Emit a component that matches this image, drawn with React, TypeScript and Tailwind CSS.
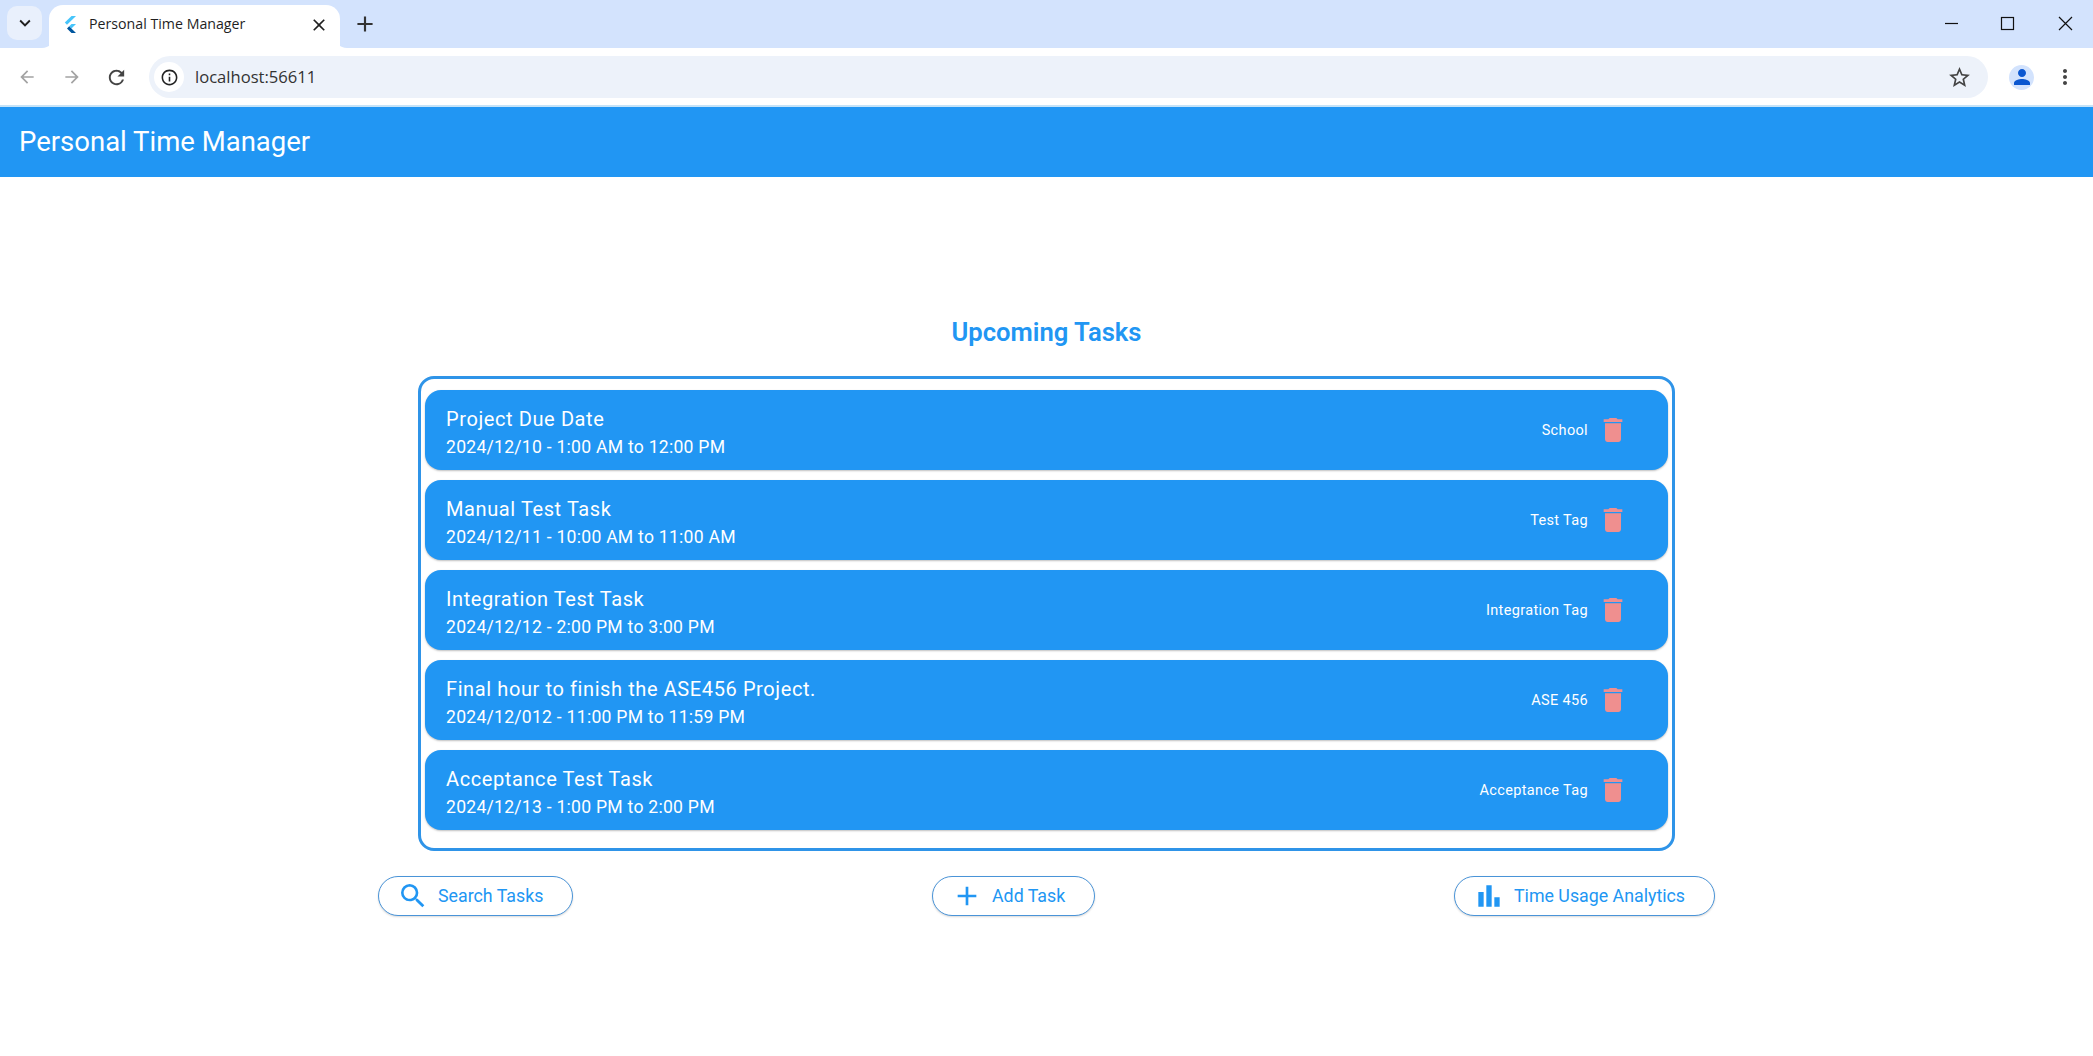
import type { ReactNode } from "react";
import {
  MdAdd,
  MdArrowBack,
  MdArrowForward,
  MdBarChart,
  MdClose,
  MdDelete,
  MdInfoOutline,
  MdKeyboardArrowDown,
  MdMoreVert,
  MdPerson,
  MdRefresh,
  MdSearch,
  MdStarBorder,
} from "react-icons/md";

const tasks = [
  { title: "Project Due Date", when: "2024/12/10 - 1:00 AM to 12:00 PM", tag: "School" },
  { title: "Manual Test Task", when: "2024/12/11 - 10:00 AM to 11:00 AM", tag: "Test Tag" },
  { title: "Integration Test Task", when: "2024/12/12 - 2:00 PM to 3:00 PM", tag: "Integration Tag" },
  { title: "Final hour to finish the ASE456 Project.", when: "2024/12/012 - 11:00 PM to 11:59 PM", tag: "ASE 456" },
  { title: "Acceptance Test Task", when: "2024/12/13 - 1:00 PM to 2:00 PM", tag: "Acceptance Tag" },
];

function FlutterLogo() {
  return (
    <svg width="14" height="17" viewBox="0 0 14 17">
      <path d="M8.5 0H13L4 8.8 1.8 6.6z" fill="#47c5fb" />
      <path d="M8.5 8H13L8.4 12.5 6.2 10.3z" fill="#47c5fb" />
      <path d="M6.2 10.3l2.2 2.2 4.6 4.5H8.5l-4.5-4.5z" fill="#00569e" />
    </svg>
  );
}

function TabCorner({ side }: { side: "left" | "right" }) {
  return (
    <svg width="12" height="12" viewBox="0 0 12 12" className="self-end shrink-0">
      {side === "left" ? <path d="M12 0v12H0C7 12 12 7 12 0z" fill="#fff" /> : <path d="M0 0v12h12C5 12 0 7 0 0z" fill="#fff" />}
    </svg>
  );
}

function TabStrip() {
  return (
    <div className="h-12 bg-[#d3e3fd] flex items-end shrink-0">
      <div className="w-[35px] h-[34px] ml-[7px] mb-2 rounded-[10px] bg-[#e9f0fc] flex items-center justify-center text-[#1f1f1f]">
        <MdKeyboardArrowDown size={22} />
      </div>
      <TabCorner side="left" />
      <div className="-ml-[5px] -mr-[5px] w-[291px] h-[43px] bg-white rounded-t-[14px] flex items-center pl-[14px] pb-[4px] z-10">
        <FlutterLogo />
        <span className="ml-[12px] font-['Open_Sans',sans-serif] text-[14.2px] text-[#1f1f1f] leading-none">Personal Time Manager</span>
        <MdClose size={20} className="ml-auto mr-[11px] text-[#1f1f1f]" />
      </div>
      <TabCorner side="right" />
      <MdAdd size={26} className="ml-[5px] mb-[11px] text-[#333]" />
      <div className="ml-auto h-full flex items-center text-black">
        <svg width="58" height="48" viewBox="0 0 58 48">
          <path d="M24 23.5h13" stroke="#111" strokeWidth="1.2" />
        </svg>
        <svg width="58" height="48" viewBox="0 0 58 48">
          <rect x="22.5" y="17.5" width="12" height="12" fill="none" stroke="#111" strokeWidth="1.2" />
        </svg>
        <svg width="56" height="48" viewBox="0 0 56 48">
          <path d="M22 17l13 13M35 17L22 30" stroke="#111" strokeWidth="1.2" />
        </svg>
      </div>
    </div>
  );
}

function Toolbar() {
  return (
    <div className="h-[57px] pt-px bg-white flex items-center shrink-0 rounded-t-[10px]">
      <MdArrowBack size={20} className="ml-[17px] text-[#a3a3a3]" />
      <MdArrowForward size={20} className="ml-[25px] text-[#a3a3a3]" />
      <MdRefresh size={23} className="ml-[23px] text-[#444]" />
      <div className="ml-[21px] h-[42px] w-[1839px] rounded-full bg-[#edf2fa] flex items-center pl-[5px] pr-[16px]">
        <div className="w-[30px] h-[30px] rounded-full bg-white flex items-center justify-center text-[#222]">
          <MdInfoOutline size={19} />
        </div>
        <span className="ml-[11px] font-['Open_Sans',sans-serif] text-[16.6px] text-[#333]">localhost:56611</span>
        <MdStarBorder size={25} className="ml-auto text-[#444]" />
      </div>
      <div className="ml-[21px] w-[25px] h-[25px] rounded-full bg-[#d3e3fd] flex items-center justify-center text-[#0b57d0]">
        <MdPerson size={24} />
      </div>
      <MdMoreVert size={24} className="ml-[19px] text-[#444]" />
    </div>
  );
}

function TaskCard({ title, when, tag }: { title: string; when: string; tag: string }) {
  return (
    <div className="h-20 rounded-[16px] bg-[#2196f3] shadow-[0_1px_2px_rgba(0,0,0,0.25)] flex items-center pl-[21px] pr-[39px] text-white">
      <div className="flex-1 pt-[4px]">
        <div className="text-[20px] leading-[28px] tracking-[0.6px]">{title}</div>
        <div className="mt-[2px] text-[17.6px] leading-[24px] tracking-[0.25px]">{when}</div>
      </div>
      <span className="pt-[1px] text-[14.5px] tracking-[0.35px]">{tag}</span>
      <MdDelete size={32} className="ml-[9px] text-[#ef8f8f]" />
    </div>
  );
}

function ActionButton({ icon, label, width }: { icon: ReactNode; label: string; width: string }) {
  return (
    <button className={`${width} h-[40px] rounded-full border-[1.5px] border-[#4a94d8] bg-white shadow-[0_1px_2px_rgba(0,0,0,0.15)] flex items-center pl-[20px] text-[#2196f3] text-[17.8px]`}>
      {icon}
      <span className="ml-[9px]">{label}</span>
    </button>
  );
}

export default function App() {
  return (
    <div className="w-[2093px] h-[1056px] overflow-hidden bg-white flex flex-col font-['Roboto',sans-serif]">
      <TabStrip />
      <Toolbar />
      <div className="h-[2px] bg-[#c5e3f8] shrink-0" />
      <header className="h-[70px] bg-[#2196f3] shrink-0 flex items-center pl-[19px] text-[27.5px] text-white">
        Personal Time Manager
      </header>
      <main className="flex flex-col items-center">
        <h1 className="mt-[137px] h-[36px] text-[25.6px] leading-[36px] font-semibold text-[#2196f3]">Upcoming Tasks</h1>
        <div className="mt-[26px] w-[1257px] h-[475px] rounded-[16px] border-[3px] border-[#2f94e8] px-[4px] pt-[11px] flex flex-col gap-[10px]">
          {tasks.map((t) => (
            <TaskCard key={t.title} {...t} />
          ))}
        </div>
        <div className="mt-[25px] w-[1337px] flex justify-between">
          <ActionButton width="w-[195px]" label="Search Tasks" icon={<MdSearch size={32} className="-ml-[2px]" />} />
          <ActionButton width="w-[163px]" label="Add Task" icon={<MdAdd size={32} className="-ml-[2px]" />} />
          <ActionButton width="w-[261px]" label="Time Usage Analytics" icon={<MdBarChart size={32} className="-ml-[2px]" />} />
        </div>
      </main>
    </div>
  );
}
